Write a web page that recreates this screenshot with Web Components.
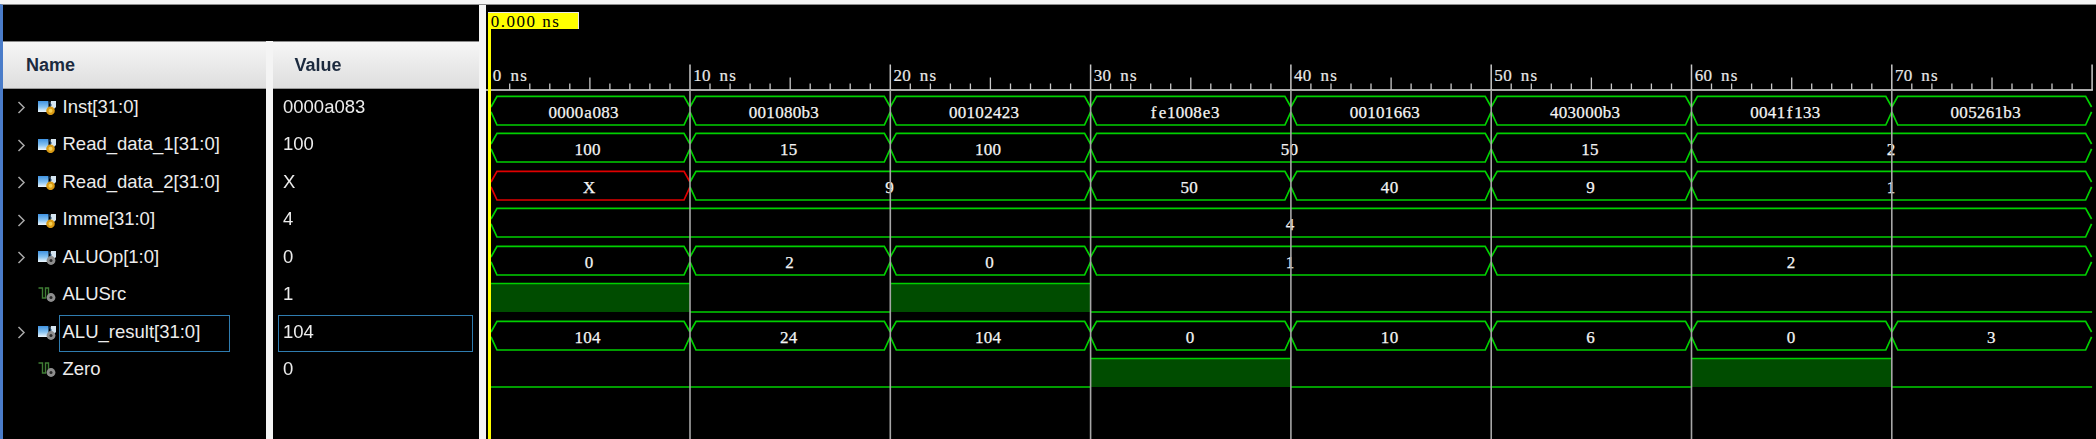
<!DOCTYPE html>
<html>
<head>
<meta charset="utf-8">
<style>
  html, body { margin: 0; background: #f4f4f4; }
  body { width: 2096px; height: 439px; overflow: hidden; }
</style>
</head>
<body>
<wave-app>
  <wave-pane slot="names" title="Name" inset="23">
    <signal-row kind="bus" badge="gold">Inst[31:0]</signal-row>
    <signal-row kind="bus" badge="gold">Read_data_1[31:0]</signal-row>
    <signal-row kind="bus" badge="gold">Read_data_2[31:0]</signal-row>
    <signal-row kind="bus" badge="gold">Imme[31:0]</signal-row>
    <signal-row kind="bus" badge="gray">ALUOp[1:0]</signal-row>
    <signal-row kind="bit" badge="gray">ALUSrc</signal-row>
    <signal-row kind="bus" badge="gray" selected>ALU_result[31:0]</signal-row>
    <signal-row kind="bit" badge="gray">Zero</signal-row>
  </wave-pane>
  <wave-pane slot="values" title="Value" inset="22">
    <value-row>0000a083</value-row>
    <value-row>100</value-row>
    <value-row>X</value-row>
    <value-row>4</value-row>
    <value-row>0</value-row>
    <value-row>1</value-row>
    <value-row selected>104</value-row>
    <value-row>0</value-row>
  </wave-pane>
  <wave-canvas slot="wave">
    <bus-wave segs="0:0000a083,10:001080b3,20:00102423,30:fe1008e3,40:00101663,50:403000b3,60:0041f133,70:005261b3"></bus-wave>
    <bus-wave segs="0:100,10:15,20:100,30:50,50:15,60:2"></bus-wave>
    <bus-wave segs="0:X,10:9,30:50,40:40,50:9,60:1"></bus-wave>
    <bus-wave segs="0:4"></bus-wave>
    <bus-wave segs="0:0,10:2,20:0,30:1,50:2"></bus-wave>
    <bit-wave edges="0:1,10:0,20:1,30:0"></bit-wave>
    <bus-wave segs="0:104,10:24,20:104,30:0,40:10,50:6,60:0,70:3"></bus-wave>
    <bit-wave edges="0:0,30:1,40:0,60:1,70:0"></bit-wave>
  </wave-canvas>
</wave-app>

<script>
// time axis, shared by every wave element. x is relative to the wave panel
const X0 = 3.7;
const NS = 20.03;
const END = 80;
const PITCH = 8.8;
const GREEN = "#00d000";
const timeX = (t) => X0 + t * NS;

// one x per glyph, text-anchor middle then centres each glyph in its cell
const cells = (text, start) =>
    [...text].map((c, i) => (start + PITCH * (i + 0.5)).toFixed(1)).join(" ");

const parsePairs = (str) => str.split(",").map((p) => p.split(":"));

class WaveApp extends HTMLElement {
    constructor() {
        super();
        this.attachShadow({ mode: "open" });
    }

    connectedCallback() {
        this.shadowRoot.innerHTML = `
            <style>
                :host {
                    display: block;
                    height: 439px;
                    padding-top: 4px;
                    box-sizing: border-box;
                    filter: blur(0.4px);
                }
                .frame {
                    display: grid;
                    grid-template-columns: 263px 206.5px 1fr;
                    grid-template-rows: 36px 1fr;
                    column-gap: 6.5px;
                    height: 100%;
                    box-sizing: border-box;
                    border-top: 1.5px solid #8c8c8c;
                    border-left: 3.5px solid #4a7cc9;
                }
                .band {
                    grid-column: 1 / 3;
                    background: #000;
                }
                ::slotted([slot="wave"]) {
                    grid-column: 3;
                    grid-row: 1 / 3;
                }
                ::slotted([slot="names"]) { grid-column: 1; grid-row: 2; }
                ::slotted([slot="values"]) { grid-column: 2; grid-row: 2; }
            </style>
            <div class="frame">
                <div class="band"></div>
                <slot name="names"></slot>
                <slot name="values"></slot>
                <slot name="wave"></slot>
            </div>
        `;
    }
}

class WavePane extends HTMLElement {
    constructor() {
        super();
        this.attachShadow({ mode: "open" });
    }

    connectedCallback() {
        this.shadowRoot.innerHTML = `
            <style>
                :host {
                    display: block;
                    background: #000;
                    font-family: "Liberation Sans", sans-serif;
                    overflow: hidden;
                }
                .head {
                    height: 48px;
                    box-sizing: border-box;
                    display: flex;
                    align-items: center;
                    padding-left: ${this.getAttribute("inset")}px;
                    background: linear-gradient(#f6f6f6, #dedede);
                    border-top: 1px solid #8a8a8a;
                    border-bottom: 1.5px solid #9a9a9a;
                    color: #1c2a3e;
                    font-size: 18px;
                    font-weight: bold;
                }
                .rows {
                    display: flex;
                    flex-direction: column;
                }
            </style>
            <div class="head">${this.getAttribute("title")}</div>
            <div class="rows"><slot></slot></div>
        `;
    }
}

function badgeIcon(badge) {
    if (badge === "gold") {
        return `<circle cx="12.5" cy="10.8" r="4.3" fill="#d99a14"/>
                <circle cx="12.5" cy="10.8" r="2" fill="#f6cf50"/>`;
    }
    return `<circle cx="13" cy="10.5" r="4.4" fill="#8e8e8e"/>
            <circle cx="13" cy="10.5" r="1.5" fill="#2a2a2a"/>`;
}

const busIcon = (badge) => `
    <svg width="19" height="15" viewBox="0 0 19 15">
        <defs>
            <linearGradient id="tile" x1="0" y1="0" x2="0" y2="1">
                <stop offset="0" stop-color="#3f93e2"/>
                <stop offset="0.55" stop-color="#86c2f0"/>
                <stop offset="1" stop-color="#f0f8fd"/>
            </linearGradient>
        </defs>
        <rect x="0" y="1" width="10.5" height="11" fill="url(#tile)"/>
        <path d="M13 1h5v6l-2 2h-3l-1-4z" fill="#d4e4f0"/>
        <path d="M10.5 1l2.5 4-2.5 4" fill="none" stroke="#123352" stroke-width="1.2"/>
        ${badgeIcon(badge)}
    </svg>`;

const bitIcon = (badge) => `
    <svg width="19" height="16" viewBox="0 0 19 16">
        <path d="M0.5 1h4v10h3v-10h3v10" fill="none" stroke="#3f7d34" stroke-width="1.4"/>
        ${badgeIcon(badge)}
    </svg>`;

class SignalRow extends HTMLElement {
    constructor() {
        super();
        this.attachShadow({ mode: "open" });
    }

    connectedCallback() {
        const isBus = this.getAttribute("kind") === "bus";
        const badge = this.getAttribute("badge");
        this.shadowRoot.innerHTML = `
            <style>
                :host {
                    display: flex;
                    align-items: center;
                    height: 37.5px;
                    font-size: 18.5px;
                    color: #ececec;
                }
                .arrow { width: 34.5px; padding-left: 14px; box-sizing: border-box; display: flex; }
                .icon { width: 24px; display: flex; }
                .name {
                    height: 37px;
                    line-height: 31.5px;
                    margin-left: -3px;
                    padding: 0 3px;
                    box-sizing: border-box;
                    border: 1.3px solid transparent;
                    margin-top: 1px;
                    min-width: 171px;
                }
                :host([selected]) .name { border-color: #2f7cb0; }
            </style>
            <div class="arrow">
                ${isBus ? `<svg width="9" height="13" viewBox="0 0 9 13"><path d="M1.5 1l5.5 5.5-5.5 5.5" fill="none" stroke="#a8a8a8" stroke-width="1.5"/></svg>` : ""}
            </div>
            <div class="icon">${isBus ? busIcon(badge) : bitIcon(badge)}</div>
            <div class="name"><slot></slot></div>
        `;
    }
}

class ValueRow extends HTMLElement {
    constructor() {
        super();
        this.attachShadow({ mode: "open" });
    }

    connectedCallback() {
        this.shadowRoot.innerHTML = `
            <style>
                :host {
                    display: flex;
                    align-items: center;
                    height: 37.5px;
                    padding: 0 6.5px 0 5.5px;
                    font-size: 18.5px;
                    color: #ececec;
                }
                .text {
                    flex: 1;
                    height: 37px;
                    line-height: 31.5px;
                    margin-top: 1px;
                    padding-left: 4px;
                    box-sizing: border-box;
                    border: 1.3px solid transparent;
                }
                :host([selected]) .text { border-color: #2f7cb0; }
            </style>
            <div class="text"><slot></slot></div>
        `;
    }
}

class WaveCanvas extends HTMLElement {
    constructor() {
        super();
        this.attachShadow({ mode: "open" });
    }

    connectedCallback() {
        let ticks = "";
        let labels = "";
        for (let i = 0; i <= END; i++) {
            const x = timeX(i).toFixed(1);
            if (i % 10 === 0) {
                ticks += `<line x1="${x}" x2="${x}" y1="59.5" y2="85" stroke="#c8c8c8" stroke-width="1.5"/>`;
                if (i < END) {
                    const text = `${i} ns`;
                    labels += `<text y="75.5" text-anchor="middle" x="${cells(text, timeX(i) + 3)}">${text}</text>`;
                }
            } else {
                const top = i % 5 === 0 ? 72.5 : 78.5;
                ticks += `<line x1="${x}" x2="${x}" y1="${top}" y2="85" stroke="#c8c8c8" stroke-width="1.3"/>`;
            }
        }
        let grid = "";
        for (let i = 10; i < END; i += 10) {
            const x = timeX(i).toFixed(1);
            grid += `<line x1="${x}" x2="${x}" y1="85" y2="434" stroke="#a6a6a6" stroke-width="1.6"/>`;
        }
        this.shadowRoot.innerHTML = `
            <style>
                :host {
                    display: block;
                    position: relative;
                    background: #000;
                    overflow: hidden;
                }
                .ruler { display: block; width: 100%; height: 86.5px; }
                .ruler text {
                    font-family: "Liberation Serif", serif;
                    font-size: 17px;
                    fill: #e8e8e8;
                    stroke: #e8e8e8;
                    stroke-width: 0.2px;
                }
                .rows { display: flex; flex-direction: column; }
                .grid {
                    position: absolute;
                    left: 0;
                    top: 0;
                    width: 100%;
                    height: 100%;
                    pointer-events: none;
                }
                .cursor {
                    position: absolute;
                    left: 2.7px;
                    top: 6.5px;
                    bottom: 0;
                    width: 2.6px;
                    background: #ffff00;
                }
                .marker {
                    position: absolute;
                    left: 2.7px;
                    top: 6.5px;
                    width: 90.5px;
                    height: 17.5px;
                    box-sizing: border-box;
                    background: #ffff00;
                    border: 1px solid #e8e8e8;
                    border-left: none;
                    border-bottom: none;
                    font-family: "Liberation Serif", serif;
                    font-size: 17px;
                    line-height: 18px;
                    color: #000;
                    white-space: pre;
                    padding-left: 2.5px;
                    letter-spacing: 1.5px;
                }
            </style>
            <svg class="ruler">
                <line x1="0" x2="1606.9" y1="85" y2="85" stroke="#e4e4e4" stroke-width="1.7"/>
                ${ticks}
                ${labels}
            </svg>
            <div class="rows"><slot></slot></div>
            <svg class="grid">${grid}</svg>
            <div class="cursor"></div>
            <div class="marker">0.000 ns</div>
        `;
    }
}

class BusWave extends HTMLElement {
    constructor() {
        super();
        this.attachShadow({ mode: "open" });
    }

    connectedCallback() {
        const segs = parsePairs(this.getAttribute("segs"));
        let shapes = "";
        let labels = "";
        const top = 4.3, bottom = 33, upper = 15, lower = 19.8, slope = 6;
        segs.forEach(([t, value], i) => {
            const from = Number(t);
            const to = i + 1 < segs.length ? Number(segs[i + 1][0]) : END;
            const l = from === 0 ? timeX(0) + 1.3 : timeX(from);
            const r = to === END ? timeX(END) - 0.5 : timeX(to);
            const colour = value === "X" ? "#e00000" : GREEN;
            shapes += `<path fill="none" stroke="${colour}" stroke-width="1.7"
                d="M${l} ${upper}L${l + slope} ${top}H${r - slope}L${r} ${upper}
                   M${l} ${lower}L${l + slope} ${bottom}H${r - slope}L${r} ${lower}"/>`;
            // vivado puts the glyphs in fixed cells around the middle of the segment
            const mid = timeX((from + to) / 2);
            const start = mid - value.length * 5.2;
            labels += `<text y="26.3" text-anchor="middle" x="${cells(value, start)}">${value}</text>`;
        });
        this.shadowRoot.innerHTML = `
            <style>
                :host { display: block; height: 37.5px; }
                svg { display: block; width: 100%; height: 37.5px; }
                text {
                    font-family: "Liberation Serif", serif;
                    font-size: 17px;
                    fill: #f4f4f4;
                    stroke: #f4f4f4;
                    stroke-width: 0.25px;
                }
            </style>
            <svg>${shapes}${labels}</svg>
        `;
    }
}

class BitWave extends HTMLElement {
    constructor() {
        super();
        this.attachShadow({ mode: "open" });
    }

    connectedCallback() {
        const edges = parsePairs(this.getAttribute("edges"));
        let shapes = "";
        const top = 4.5, bottom = 33;
        edges.forEach(([t, level], i) => {
            const from = Number(t);
            const to = i + 1 < edges.length ? Number(edges[i + 1][0]) : END;
            const l = from === 0 ? timeX(0) + 1.3 : timeX(from);
            const r = to === END ? timeX(END) : timeX(to);
            if (level === "1") {
                shapes += `<rect x="${l}" y="${top}" width="${r - l}" height="${bottom - top}" fill="#004c00"/>
                           <line x1="${l}" x2="${r}" y1="${top}" y2="${top}" stroke="${GREEN}" stroke-width="1.7"/>`;
            } else {
                shapes += `<line x1="${l}" x2="${r}" y1="${bottom}" y2="${bottom}" stroke="${GREEN}" stroke-width="1.7"/>`;
            }
        });
        this.shadowRoot.innerHTML = `
            <style>
                :host { display: block; height: 37.5px; }
                svg { display: block; width: 100%; height: 37.5px; }
            </style>
            <svg>${shapes}</svg>
        `;
    }
}

customElements.define("wave-app", WaveApp);
customElements.define("wave-pane", WavePane);
customElements.define("signal-row", SignalRow);
customElements.define("value-row", ValueRow);
customElements.define("wave-canvas", WaveCanvas);
customElements.define("bus-wave", BusWave);
customElements.define("bit-wave", BitWave);
</script>
</body>
</html>
